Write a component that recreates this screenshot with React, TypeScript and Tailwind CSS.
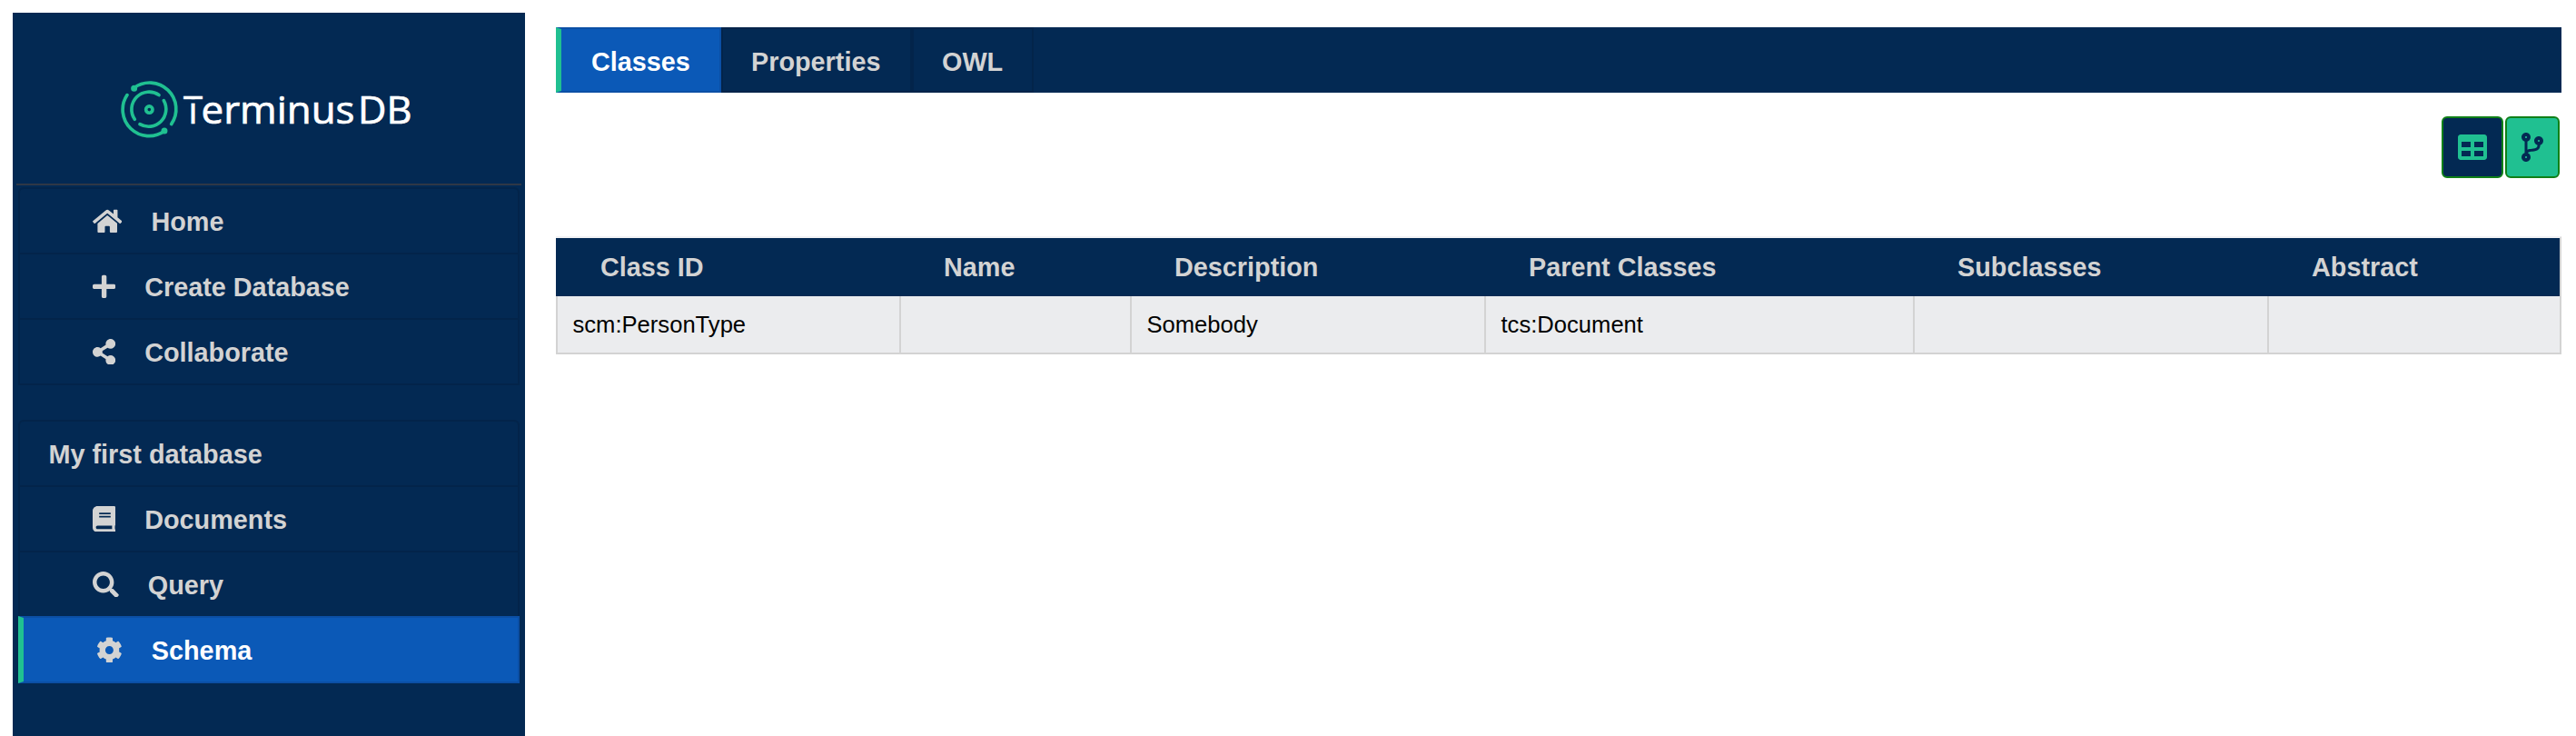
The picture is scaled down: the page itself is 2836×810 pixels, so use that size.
import React from "react";
import { FaHome, FaPlus, FaShareAlt, FaBook, FaSearch, FaCog, FaTable, FaCodeBranch } from "react-icons/fa";
import type { IconType } from "react-icons";

function Logo() {
  return (
    <svg className="h-16 w-[340px]" viewBox="0 0 340 64" aria-label="TerminusDB">
      <g transform="translate(32.3 32.6) scale(0.33333)" fill="none" stroke="#20c091" strokeWidth="11" strokeLinecap="round">
        <path d="M-51-71A87 87 0 0 1 73 48" />
        <path d="M-73-48A87 87 0 0 0 50 71" />
        <path d="M32-48A57.5 57.5 0 0 0-48 32" />
        <path d="M48-30A57.5 57.5 0 0 1-31 48" />
        <circle r="11" />
        <circle cx="-50" cy="-70" r="5" />
        <circle cx="50" cy="70" r="5" />
      </g>
      <g fill="#fff" stroke="#fff" strokeWidth="0.7" fontFamily="'Open Sans', sans-serif" fontSize="42.8" fontWeight="500">
        <text x="70" y="47.7" textLength="21" lengthAdjust="spacingAndGlyphs">T</text>
        <rect x="68" y="21.4" width="26" height="4.2" fill="#032953" stroke="none" />
        <text x="89.5" y="47.7" textLength="169" lengthAdjust="spacingAndGlyphs">erminus</text>
        <text x="262" y="47.7" textLength="59.5" lengthAdjust="spacingAndGlyphs">DB</text>
      </g>
    </svg>
  );
}

type Item = { label: string; icon?: IconType; iconWidth?: string; active?: boolean };

function Menu({ items }: { items: Item[] }) {
  return (
    <ul className="mx-1.5 flex flex-col">
      {items.map(({ label, icon: Icon, iconWidth, active }) => (
        <li
          key={label}
          className={
            active
              ? "relative -mb-0.5 flex h-[74px] items-center gap-8 border-2 border-l-[6px] border-[#0b4fa5] border-l-[#20c091] bg-[#0b59b7] pl-20 text-white"
              : "-mb-0.5 flex h-[74px] items-center gap-8 border-2 border-[#03244a] first:rounded-t-md " + (Icon ? "pl-20" : "pl-[31.5px]")
          }
        >
          {Icon && <Icon className={"h-[28.8px] shrink-0 text-[#d3d3d3] " + iconWidth} />}
          <span className="pt-0.5">{label}</span>
        </li>
      ))}
    </ul>
  );
}

const columns = [
  { title: "Class ID", value: "scm:PersonType", width: "w-[378px]" },
  { title: "Name", value: "", width: "w-[254px]" },
  { title: "Description", value: "Somebody", width: "w-[390px]" },
  { title: "Parent Classes", value: "tcs:Document", width: "w-[472px]" },
  { title: "Subclasses", value: "", width: "w-[390px]" },
  { title: "Abstract", value: "", width: "w-[324px]" },
];

export default function App() {
  return (
    <div className="flex h-[810px] w-[2836px] overflow-hidden bg-white pt-3.5 pl-3.5 font-['Liberation_Sans',sans-serif] text-[28.8px] leading-9 font-bold text-[#d3d3d3]">
      <aside className="w-[564px] shrink-0 bg-[#032953]">
        <div className="mx-1 mb-0.5 flex h-[190px] border-b-2 border-[#2e3746] pt-[74px] pl-[114px]">
          <Logo />
        </div>
        <Menu
          items={[
            { label: "Home", icon: FaHome, iconWidth: "w-[32.4px]" },
            { label: "Create Database", icon: FaPlus, iconWidth: "w-[25.2px]" },
            { label: "Collaborate", icon: FaShareAlt, iconWidth: "w-[25.2px]" },
          ]}
        />
        <div className="h-10" />
        <Menu
          items={[
            { label: "My first database" },
            { label: "Documents", icon: FaBook, iconWidth: "w-[25.2px]" },
            { label: "Query", icon: FaSearch, iconWidth: "w-[28.8px]" },
            { label: "Schema", icon: FaCog, iconWidth: "w-[28.8px]", active: true },
          ]}
        />
      </aside>
      <main className="ml-[34px] w-[2208px] pt-4">
        <nav className="flex h-[72px] bg-[#032953]">
          <div className="flex w-[182px] items-center border-t-2 border-r-2 border-b-2 border-l-[6px] border-[#0b4fa5] border-l-[#20c091] bg-[#0b59b7] pt-[3px] pl-[33px] text-white">
            Classes
          </div>
          <div className="flex w-[210px] items-center border-2 border-[#03244a] pt-[3px] pl-[31px]">Properties</div>
          <div className="flex w-[134px] items-center border-2 border-[#03244a] pt-[3px] pl-[31px]">OWL</div>
        </nav>
        <div className="mt-[26px] flex justify-end gap-0.5 pr-0.5">
          <button className="flex size-[68px] items-center justify-center rounded-md border-2 border-[#108018] bg-[#032953] text-[#20c091]">
            <FaTable className="size-8" />
          </button>
          <button className="flex h-[68px] w-[60px] items-center justify-center rounded-md border-2 border-[#108018] bg-[#20c091] text-[#032953]">
            <FaCodeBranch className="h-8 w-6" />
          </button>
        </div>
        <table className="mt-16 w-[2208px] table-fixed border-separate border-spacing-0 text-left">
          <thead>
            <tr>
              {columns.map((c) => (
                <th key={c.title} className={"h-[66px] border-t-2 border-[#f1f1f4] bg-[#032953] p-0 pl-[49px] font-bold last:border-r-2 last:border-r-[#d3d3d3] " + c.width}>
                  {c.title}
                </th>
              ))}
            </tr>
          </thead>
          <tbody>
            <tr>
              {columns.map((c) => (
                <td key={c.title} className="h-16 border-b-2 border-l-2 border-[#d3d3d3] bg-[#ebecee] p-0 pl-[16.5px] text-[25.6px] font-normal text-black last:border-r-2">
                  {c.value}
                </td>
              ))}
            </tr>
          </tbody>
        </table>
      </main>
    </div>
  );
}
